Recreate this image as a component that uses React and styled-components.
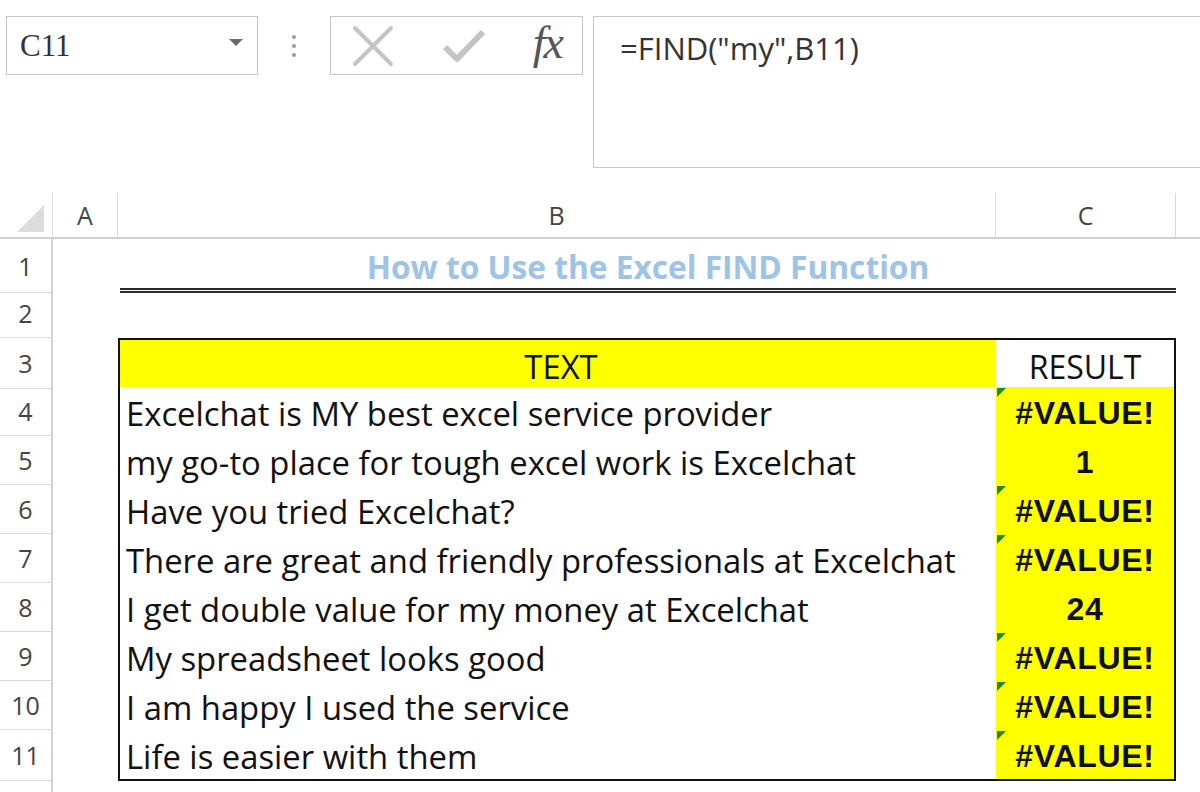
import styled, { createGlobalStyle } from 'styled-components'

const GlobalStyle = createGlobalStyle`
  html, body {
    margin: 0;
    padding: 0;
    background: #ffffff;
    width: 1200px;
    height: 792px;
    overflow: hidden;
  }
  body {
    font-family: "Open Sans", "Noto Sans", sans-serif;
  }
`;

const Page = styled.div`
  width: 1200px;
  height: 792px;
  overflow: hidden;
  display: flex;
  flex-direction: column;
  background: #fff;
  & > * {
    flex-shrink: 0;
  }
`;

const FormulaArea = styled.div`
  display: flex;
  align-items: flex-start;
  padding: 16px 0 0 6px;
  height: 177px;
  box-sizing: border-box;
`;

const NameBox = styled.div`
  width: 252px;
  height: 59px;
  box-sizing: border-box;
  border: 1px solid #c6c6c6;
  display: flex;
  align-items: center;
  justify-content: space-between;
  padding: 0 14px 0 13px;
  font-family: "Liberation Serif", "DejaVu Serif", serif;
  font-size: 31px;
  color: #333;
`;

const Caret = styled.span`
  width: 0;
  height: 0;
  border-left: 7px solid transparent;
  border-right: 7px solid transparent;
  border-top: 7px solid #6a6a6a;
  margin-bottom: 6px;
`;

const Grip = styled.div`
  width: 72px;
  height: 59px;
  display: flex;
  flex-direction: column;
  align-items: center;
  justify-content: center;
  gap: 5px;
  span {
    width: 4px;
    height: 4px;
    border-radius: 50%;
    background: #9a9a9a;
  }
`;

const ButtonBox = styled.div`
  width: 253px;
  height: 59px;
  box-sizing: border-box;
  border: 1px solid #c6c6c6;
  display: flex;
  align-items: center;
  justify-content: space-between;
  padding: 0 20px 0 20px;
`;

const Fx = styled.span`
  font-family: "Liberation Serif", "DejaVu Serif", serif;
  font-style: italic;
  font-size: 46px;
  color: #555;
  letter-spacing: -2px;
  line-height: 1;
  margin-top: -6px;
`;

const FormulaInput = styled.div`
  flex: 1;
  margin-left: 10px;
  height: 152px;
  box-sizing: border-box;
  border: 1px solid #c6c6c6;
  border-right: none;
  padding: 10px 0 0 26px;
  font-size: 31px;
  color: #333;
`;

const COLS = '53px 65px 878px 180px 1fr';

const HeaderRow = styled.div`
  display: grid;
  grid-template-columns: ${COLS};
  height: 62px;
  box-sizing: border-box;
  border-bottom: 2px solid #d0d0d0;
  padding-top: 16px;
`;

const ColHead = styled.div`
  display: flex;
  align-items: center;
  justify-content: center;
  font-size: 25px;
  color: #444;
  border-right: 1px solid #dadada;
`;

const Corner = styled.div`
  position: relative;
  border-right: 1px solid #dadada;
  &::after {
    content: '';
    position: absolute;
    right: 8px;
    bottom: 5px;
    width: 0;
    height: 0;
    border-left: 27px solid transparent;
    border-bottom: 27px solid #dcdcdc;
  }
`;

const Row = styled.div`
  display: grid;
  grid-template-columns: ${COLS};
  height: ${p => p.$h || 49}px;
`;

const RowHead = styled.div`
  display: flex;
  align-items: center;
  justify-content: center;
  font-size: 25px;
  color: #444;
  border-right: 2px solid #d0d0d0;
  border-bottom: 1px solid #dadada;
  box-sizing: border-box;
`;

const Cell = styled.div`
  box-sizing: border-box;
`;

const TitleCell = styled.div`
  grid-column: 3 / 5;
  display: flex;
  align-items: center;
  justify-content: center;
  margin-left: 2px;
  border-bottom: 5px double #2a2a2a;
  font-weight: 700;
  font-size: 31.7px;
  color: #9dc3e6;
  padding-top: 6px;
  box-sizing: border-box;
`;

const TextCell = styled.div`
  box-sizing: border-box;
  display: flex;
  align-items: center;
  justify-content: ${p => (p.$center ? 'center' : 'flex-start')};
  padding: 4px 0 0 6px;
  font-size: 32.8px;
  color: #111;
  white-space: nowrap;
  background: ${p => (p.$fill ? '#ffff00' : '#fff')};
  border-left: 2px solid #111;
  border-top: ${p => (p.$first ? '2px solid #111' : 'none')};
  border-bottom: ${p => (p.$last ? '2px solid #111' : 'none')};
`;

const ResultCell = styled.div`
  position: relative;
  box-sizing: border-box;
  display: flex;
  align-items: center;
  justify-content: center;
  padding-top: 4px;
  font-family: ${p => (p.$bold ? '"Liberation Sans", Arial, sans-serif' : 'inherit')};
  font-weight: ${p => (p.$bold ? 700 : 400)};
  font-size: 32px;
  letter-spacing: ${p => (p.$bold ? '0.7px' : '0')};
  color: #111;
  background: ${p => (p.$fill ? '#ffff00' : '#fff')};
  border-right: 2px solid #111;
  border-top: ${p => (p.$first ? '2px solid #111' : 'none')};
  border-bottom: ${p => (p.$last ? '2px solid #111' : 'none')};
`;

const ErrorFlag = styled.span`
  position: absolute;
  left: 1px;
  top: 1px;
  width: 0;
  height: 0;
  border-top: 9px solid #1f8a1f;
  border-right: 9px solid transparent;
`;

const rows = [
  { text: 'Excelchat is MY best excel service provider', result: '#VALUE!' },
  { text: 'my go-to place for tough excel work is Excelchat', result: '1' },
  { text: 'Have you tried Excelchat?', result: '#VALUE!' },
  { text: 'There are great and friendly professionals at Excelchat', result: '#VALUE!' },
  { text: 'I get double value for my money at Excelchat', result: '24' },
  { text: 'My spreadsheet looks good', result: '#VALUE!' },
  { text: 'I am happy I used the service', result: '#VALUE!' },
  { text: 'Life is easier with them', result: '#VALUE!' },
];

export default function App() {
  return (
    <Page>
      <GlobalStyle />
      <FormulaArea>
        <NameBox>
          C11
          <Caret />
        </NameBox>
        <Grip>
          <span />
          <span />
          <span />
        </Grip>
        <ButtonBox>
          <svg width="44" height="44" viewBox="0 0 44 44">
            <path d="M4 4 L40 40 M40 4 L4 40" stroke="#c4c4c4" strokeWidth="4" strokeLinecap="round" />
          </svg>
          <svg width="44" height="40" viewBox="0 0 44 40">
            <path d="M3 21 L15 33 L41 6" stroke="#c4c4c4" strokeWidth="6" fill="none" strokeLinejoin="round" />
          </svg>
          <Fx>fx</Fx>
        </ButtonBox>
        <FormulaInput>=FIND("my",B11)</FormulaInput>
      </FormulaArea>

      <HeaderRow>
        <Corner />
        <ColHead>A</ColHead>
        <ColHead>B</ColHead>
        <ColHead>C</ColHead>
        <div />
      </HeaderRow>

      <Row $h={50}>
        <RowHead>1</RowHead>
        <Cell />
        <TitleCell>How to Use the Excel FIND Function</TitleCell>
        <Cell />
      </Row>
      <Row>
        <RowHead>2</RowHead>
        <Cell />
        <Cell />
        <Cell />
        <Cell />
      </Row>
      <Row>
        <RowHead>3</RowHead>
        <Cell />
        <TextCell $fill $center $first>TEXT</TextCell>
        <ResultCell $first>RESULT</ResultCell>
        <Cell />
      </Row>
      {rows.map((r, i) => {
        const isError = r.result.startsWith('#');
        return (
          <Row key={i}>
            <RowHead>{i + 4}</RowHead>
            <Cell />
            <TextCell $last={i === rows.length - 1}>{r.text}</TextCell>
            <ResultCell $fill $bold $last={i === rows.length - 1}>
              {isError && <ErrorFlag />}
              {r.result}
            </ResultCell>
            <Cell />
          </Row>
        );
      })}
      <Row>
        <RowHead />
      </Row>
    </Page>
  );
}
